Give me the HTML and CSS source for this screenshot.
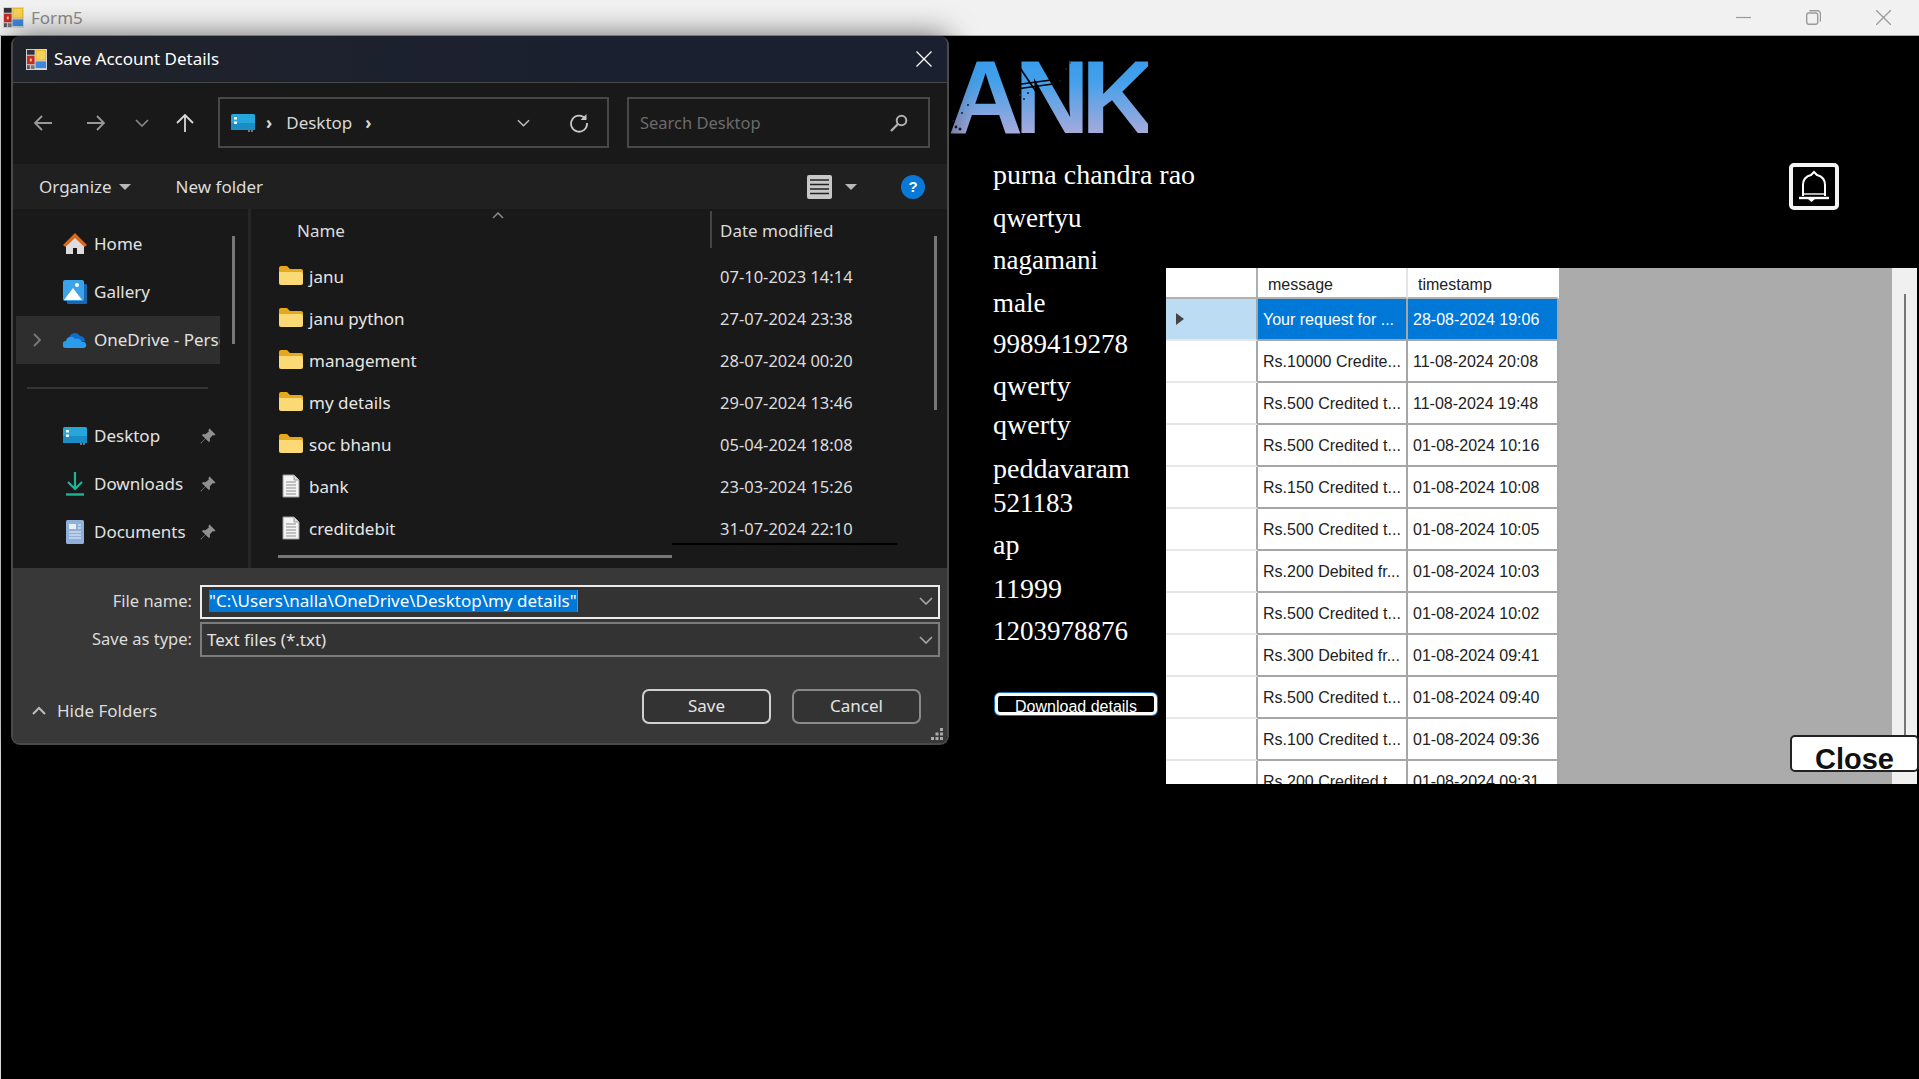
FILE: index.html
```html
<!DOCTYPE html>
<html lang="en">
<head>
<meta charset="utf-8">
<title>Form5</title>
<link rel="stylesheet" href="styles.css">
</head>
<body>
<svg class="defs" aria-hidden="true">
  <symbol id="appicon" viewBox="0 0 22 22">
    <rect width="22" height="22" fill="#d8d8d8"/>
    <rect x="1" y="1" width="8" height="5" fill="#333"/>
    <rect x="10" y="1" width="11" height="11" fill="#e8b820"/>
    <rect x="11" y="2" width="9" height="9" fill="#f6d25a"/>
    <rect x="1" y="7" width="8" height="9" fill="#c42a2a"/>
    <rect x="4" y="10" width="2" height="3" fill="#f6d25a"/>
    <rect x="10" y="13" width="11" height="7" fill="#3f86de"/>
    <rect x="1" y="17" width="3" height="4" fill="#555"/>
    <rect x="5" y="17" width="4" height="4" fill="#777"/>
  </symbol>
  <symbol id="folder" viewBox="0 0 24 20">
    <path d="M0 3a2 2 0 0 1 2-2h6l3 3h11a2 2 0 0 1 2 2v2H0z" fill="#e6a91e"/>
    <path d="M0 7h22a2 2 0 0 1 2 2v9a2 2 0 0 1-2 2H2a2 2 0 0 1-2-2z" fill="#fbd974"/>
  </symbol>
  <symbol id="doc" viewBox="0 0 18 24">
    <path d="M1 1h11l5 5v17H1z" fill="#f4f4f4" stroke="#9a9a9a"/>
    <path d="M4 8h10M4 11h10M4 14h10M4 17h10M4 20h10" stroke="#8e8e8e"/>
    <path d="M12 1v5h5" fill="#ddd" stroke="#9a9a9a"/>
  </symbol>
  <symbol id="desktop" viewBox="0 0 24 18">
    <rect width="24" height="16" rx="1.5" fill="#27a6da"/>
    <rect y="9" width="24" height="7" fill="#1a8cc6"/>
    <rect x="3" y="3" width="3" height="2.5" fill="#fff"/>
    <rect x="3" y="7.5" width="3" height="2.5" fill="#fff"/>
    <rect x="17" y="16" width="2" height="2" fill="#777"/>
    <rect x="20" y="16" width="2" height="2" fill="#777"/>
  </symbol>
  <symbol id="pin" viewBox="0 0 16 16">
    <path d="M9.5 0.5 15.5 6.5 14 7.5 12.5 7.2 9.8 10.6 10 13 8.8 14 5.5 10.7 1 15.5 0.5 15 5.3 10.5 2 7.2 3 6 5.4 6.2 8.8 3.5 8.5 2z" fill="#8f8f8f"/>
  </symbol>
  <symbol id="chev-down" viewBox="0 0 14 8">
    <path d="M1 1 7 7 13 1" fill="none" stroke="currentColor" stroke-width="1.6"/>
  </symbol>
</svg>

<div class="app">
  <header class="titlebar">
    <svg class="app-icon"><use href="#appicon"/></svg>
    <span class="app-title">Form5</span>
    <div class="win-controls">
      <svg class="win-btn" viewBox="0 0 15 15"><path d="M0 7.5h15" stroke="#9a9a9a" stroke-width="1.2"/></svg>
      <svg class="win-btn" viewBox="0 0 15 15"><rect x="0.7" y="3" width="11" height="11.3" rx="2" fill="none" stroke="#9a9a9a" stroke-width="1.4"/><path d="M3.5 0.8h8a3 3 0 0 1 3 3v8" fill="none" stroke="#9a9a9a" stroke-width="1.4"/></svg>
      <svg class="win-btn" viewBox="0 0 15 15"><path d="M0 0 15 15M15 0 0 15" stroke="#9a9a9a" stroke-width="1.3"/></svg>
    </div>
  </header>

  <main class="main">
    <section class="col-left">
      <div class="logo">
        <span class="logo-text">ANK</span>
        <svg class="logo-marks" viewBox="0 0 200 80">
          <path d="M66 2 116 76" stroke="#000" stroke-width="1.6"/>
          <path d="M66 28 118 21M68 32 105 27" stroke="#000" stroke-width="1.5"/>
          <g fill="#123">
            <circle cx="8" cy="70" r="1.4"/><circle cx="14" cy="56" r="1"/><circle cx="20" cy="48" r="1"/><circle cx="5" cy="64" r="1"/><circle cx="12" cy="72" r="1.5"/>
            <circle cx="72" cy="38" r="1.2"/><circle cx="80" cy="36" r="1"/><circle cx="76" cy="42" r="1"/><circle cx="118" cy="12" r="1"/><circle cx="112" cy="24" r="1"/><circle cx="122" cy="6" r="0.8"/>
          </g>
        </svg>
      </div>
      <ul class="info">
        <li>purna chandra rao</li>
        <li class="tight">qwertyu</li>
        <li class="tight">nagamani</li>
        <li class="tight">male</li>
        <li class="tight">9989419278</li>
        <li>qwerty</li>
        <li>qwerty</li>
        <li>peddavaram</li>
        <li class="tight">521183</li>
        <li>ap</li>
        <li>11999</li>
        <li class="tight">1203978876</li>
      </ul>
      <button class="download"><span>Download details</span></button>
    </section>

    <section class="col-right">
      <button class="bell" aria-label="Notifications">
        <svg viewBox="0 0 32 34" width="32" height="34">
          <path d="M5 26V15C5 9 9 6 13 5L16 2 19 5C23 6 27 9 27 15V26" fill="none" stroke="#fff" stroke-width="2"/>
          <path d="M5 24h22" stroke="#fff" stroke-width="1.4"/>
          <path d="M1 28H31" stroke="#fff" stroke-width="2.4"/>
          <path d="M10 29h7l-3.500 3z" fill="#fff"/>
        </svg>
      </button>
      <div class="dgv">
        <div class="dgv-table">
          <div class="dgv-row dgv-head"><div class="cell rowhead"></div><div class="cell">message</div><div class="cell">timestamp</div></div>
          <div class="dgv-row selected"><div class="cell rowhead"><span class="caret"></span></div><div class="cell">Your request for ...</div><div class="cell">28-08-2024 19:06</div></div>
          <div class="dgv-row"><div class="cell rowhead"></div><div class="cell">Rs.10000 Credite...</div><div class="cell">11-08-2024 20:08</div></div>
          <div class="dgv-row"><div class="cell rowhead"></div><div class="cell">Rs.500 Credited t...</div><div class="cell">11-08-2024 19:48</div></div>
          <div class="dgv-row"><div class="cell rowhead"></div><div class="cell">Rs.500 Credited t...</div><div class="cell">01-08-2024 10:16</div></div>
          <div class="dgv-row"><div class="cell rowhead"></div><div class="cell">Rs.150 Credited t...</div><div class="cell">01-08-2024 10:08</div></div>
          <div class="dgv-row"><div class="cell rowhead"></div><div class="cell">Rs.500 Credited t...</div><div class="cell">01-08-2024 10:05</div></div>
          <div class="dgv-row"><div class="cell rowhead"></div><div class="cell">Rs.200 Debited fr...</div><div class="cell">01-08-2024 10:03</div></div>
          <div class="dgv-row"><div class="cell rowhead"></div><div class="cell">Rs.500 Credited t...</div><div class="cell">01-08-2024 10:02</div></div>
          <div class="dgv-row"><div class="cell rowhead"></div><div class="cell">Rs.300 Debited fr...</div><div class="cell">01-08-2024 09:41</div></div>
          <div class="dgv-row"><div class="cell rowhead"></div><div class="cell">Rs.500 Credited t...</div><div class="cell">01-08-2024 09:40</div></div>
          <div class="dgv-row"><div class="cell rowhead"></div><div class="cell">Rs.100 Credited t...</div><div class="cell">01-08-2024 09:36</div></div>
          <div class="dgv-row"><div class="cell rowhead"></div><div class="cell">Rs.200 Credited t...</div><div class="cell">01-08-2024 09:31</div></div>
        </div>
        <div class="dgv-scroll"><span class="dgv-thumb"></span></div>
        <button class="close-btn"><span>Close</span></button>
      </div>
    </section>
  </main>

  <div class="dialog">
    <div class="dlg-title">
      <svg class="dlg-icon"><use href="#appicon"/></svg>
      <span class="dlg-caption">Save Account Details</span>
      <svg class="dlg-x" viewBox="0 0 16 16"><path d="M0.500 0.500 15.500 15.500M15.500 0.500 0.500 15.500" stroke="#fff" stroke-width="1.300"/></svg>
    </div>

    <div class="dlg-nav">
      <svg class="nav-ic" viewBox="0 0 18 16"><path d="M8 1 1 8l7 7M1 8h17" fill="none" stroke="#999" stroke-width="1.800"/></svg>
      <svg class="nav-ic nav-fwd" viewBox="0 0 18 16"><path d="M10 1l7 7-7 7M17 8H0" fill="none" stroke="#999" stroke-width="1.800"/></svg>
      <svg class="nav-ic nav-recent"><use href="#chev-down"/></svg>
      <svg class="nav-ic nav-up" viewBox="0 0 18 18"><path d="M1 9 9 1l8 8M9 1v17" fill="none" stroke="#d8d8d8" stroke-width="1.800"/></svg>
      <div class="addr">
        <svg class="addr-desk"><use href="#desktop"/></svg>
        <span class="crumb-sep">›</span>
        <span class="crumb">Desktop</span>
        <span class="crumb-sep crumb-end">›</span>
        <svg class="addr-drop"><use href="#chev-down"/></svg>
        <svg class="addr-refresh" viewBox="0 0 20 20"><path d="M16.500 6A8 8 0 1 0 18 10" fill="none" stroke="#c8c8c8" stroke-width="1.800"/><path d="M17.500 1v6h-6z" fill="#c8c8c8"/></svg>
      </div>
      <div class="search">
        <span class="search-text">Search Desktop</span>
        <svg class="search-ic" viewBox="0 0 18 18"><circle cx="11.500" cy="6.500" r="4.800" fill="none" stroke="#b0b0b0" stroke-width="2"/><path d="M8 10 1 17" stroke="#b0b0b0" stroke-width="2.400"/></svg>
      </div>
    </div>

    <div class="dlg-cmd">
      <span class="cmd-item">Organize</span>
      <span class="tri"></span>
      <span class="cmd-item cmd-new">New folder</span>
      <svg class="view-ic" viewBox="0 0 25 24"><rect width="25" height="24" rx="2" fill="#c8c8c8"/><path d="M3 5h19M3 9.500h19M3 14h19M3 18.500h19" stroke="#222" stroke-width="1.500"/></svg>
      <span class="tri tri-view"></span>
      <span class="help">?</span>
    </div>

    <div class="dlg-body">
      <nav class="tree">
        <div class="tree-row"><svg class="tree-ic" viewBox="0 0 24 24"><path d="M12 5 21 13V22H14V16H10V22H3V13z" fill="#dcdcdc"/><path d="M0 13 12 1 24 13 21.500 15 12 6 2.500 15z" fill="#d9691c"/></svg><span>Home</span></div>
        <div class="tree-row"><svg class="tree-ic" viewBox="0 0 24 24"><rect x="4" y="4" width="20" height="20" rx="1" fill="#1967b0"/><rect width="21" height="21" rx="2" fill="#3aa3ea"/><path d="M1 20 10 8l9 12z" fill="#fff"/><circle cx="14" cy="5" r="2" fill="#fff"/></svg><span>Gallery</span></div>
        <div class="tree-row active"><svg class="tree-chev" viewBox="0 0 8 14"><path d="M1 1l6 6-6 6" fill="none" stroke="#7a7a7a" stroke-width="1.800"/></svg><svg class="tree-ic" viewBox="0 0 24 16"><path d="M6 6a6 6 0 0 1 11-2 5 5 0 0 1 5 5H9z" fill="#0f6cc9"/><path d="M3 16a3.500 3.500 0 0 1 0-7 5 5 0 0 1 9-2 5 5 0 0 1 7 3 3 3 0 0 1 2 6z" fill="#2b9bec"/></svg><span>OneDrive - Personal</span></div>
        <div class="tree-sep"></div>
        <div class="tree-row"><svg class="tree-ic"><use href="#desktop"/></svg><span>Desktop</span><svg class="tree-pin"><use href="#pin"/></svg></div>
        <div class="tree-row"><svg class="tree-ic" viewBox="0 0 24 24"><path d="M12 0v17M5 10l7 7 7-7" fill="none" stroke="#1fb594" stroke-width="2.200"/><path d="M3 22.500h18" stroke="#1fb594" stroke-width="2.400"/></svg><span>Downloads</span><svg class="tree-pin"><use href="#pin"/></svg></div>
        <div class="tree-row"><svg class="tree-ic" viewBox="0 0 24 24"><rect x="3" y="0" width="18" height="24" rx="1.500" fill="#8fb0d8"/><rect x="6" y="4" width="7" height="5" fill="#e9eef5"/><path d="M15 5h3M15 8h3M6 12h12M6 15h12M6 18h12" stroke="#e9eef5" stroke-width="1.200"/></svg><span>Documents</span><svg class="tree-pin"><use href="#pin"/></svg></div>
        <span class="tree-scroll"></span>
      </nav>

      <div class="files">
        <div class="file-head">
          <span class="col-name">Name</span>
          <span class="col-date">Date modified</span>
          <svg class="sort" viewBox="0 0 12 7"><path d="M1 6 6 1l5 5" fill="none" stroke="#8a8a8a" stroke-width="1.500"/></svg>
        </div>
        <div class="file-row"><span class="fname"><svg class="ficon ficon-folder"><use href="#folder"/></svg>janu</span><span class="fdate">07-10-2023 14:14</span></div>
        <div class="file-row"><span class="fname"><svg class="ficon ficon-folder"><use href="#folder"/></svg>janu python</span><span class="fdate">27-07-2024 23:38</span></div>
        <div class="file-row"><span class="fname"><svg class="ficon ficon-folder"><use href="#folder"/></svg>management</span><span class="fdate">28-07-2024 00:20</span></div>
        <div class="file-row"><span class="fname"><svg class="ficon ficon-folder"><use href="#folder"/></svg>my details</span><span class="fdate">29-07-2024 13:46</span></div>
        <div class="file-row"><span class="fname"><svg class="ficon ficon-folder"><use href="#folder"/></svg>soc bhanu</span><span class="fdate">05-04-2024 18:08</span></div>
        <div class="file-row"><span class="fname"><svg class="ficon"><use href="#doc"/></svg>bank</span><span class="fdate">23-03-2024 15:26</span></div>
        <div class="file-row"><span class="fname"><svg class="ficon"><use href="#doc"/></svg>creditdebit</span><span class="fdate">31-07-2024 22:10</span></div>
        <span class="files-vscroll"></span>
        <span class="files-line"></span>
        <span class="files-hscroll"></span>
      </div>
    </div>

    <div class="dlg-foot">
      <div class="form">
        <label class="form-label form-label-first">File name:</label>
        <div class="field field-focus"><span class="sel">"C:\Users\nalla\OneDrive\Desktop\my details"</span><span class="caretline"></span><svg class="field-chev"><use href="#chev-down"/></svg></div>
        <label class="form-label">Save as type:</label>
        <div class="field"><span class="field-text">Text files (*.txt)</span><svg class="field-chev"><use href="#chev-down"/></svg></div>
      </div>
      <div class="actions">
        <svg class="hide-chev" viewBox="0 0 14 9"><path d="M1 8 7 2l6 6" fill="none" stroke="#bdbdbd" stroke-width="2"/></svg>
        <span class="hide-text">Hide Folders</span>
        <button class="dbtn dbtn-primary">Save</button>
        <button class="dbtn">Cancel</button>
      </div>
      <svg class="grip" viewBox="0 0 12 12"><g fill="#aaa"><rect x="9" y="0" width="3" height="3"/><rect x="4.500" y="4.500" width="3" height="3"/><rect x="9" y="4.500" width="3" height="3"/><rect x="0" y="9" width="3" height="3"/><rect x="4.500" y="9" width="3" height="3"/><rect x="9" y="9" width="3" height="3"/></g></svg>
    </div>
  </div>
</div>
</body>
</html>
```
FILE: styles.css
```css
* { box-sizing: border-box; }
html, body { margin: 0; height: 100%; background: #000; overflow: hidden; }
ul { list-style: none; margin: 0; padding: 0; }
button { font: inherit; padding: 0; cursor: default; }
.defs { position: absolute; width: 0; height: 0; }

.app {
  width: 1919px; height: 1079px; position: relative;
  display: flex; flex-direction: column;
  font-family: "Noto Sans", sans-serif;
}

/* main window title bar */
.titlebar {
  height: 36px; flex: none; background: #f1f1f1; border-bottom: 1px solid #a8a8a8;
  display: flex; align-items: center; padding-left: 3px;
}
.app-icon { width: 21px; height: 21px; }
.app-title { margin-left: 7px; font-size: 17px; color: #8c8c8c; }
.win-controls { margin-left: auto; margin-right: 28px; display: flex; gap: 55px; }
.win-btn { width: 15px; height: 15px; }

/* main window client area */
.main {
  flex: 1; background: #000; border-left: 1px solid #d8d8d8;
  padding-left: 949px; display: grid; grid-template-columns: 216px 1fr; align-items: start;
}
.col-left { display: flex; flex-direction: column; align-items: flex-start; }

.logo { position: relative; margin: 21px 0 0 -2px; height: 80px; width: 200px; }
.logo-text {
  display: block; font: bold 104px/80px "Liberation Sans", sans-serif; letter-spacing: -8.5px;
  background: linear-gradient(#369ceb, #44a0ea 30%, #a6aadb 95%);
  -webkit-background-clip: text; background-clip: text; color: transparent;
}
.logo-marks { position: absolute; inset: 0; width: 200px; height: 80px; }

.info {
  margin-top: 23px; padding-left: 43px; display: grid;
  grid-template-rows: 43px 42px 43px 41px 42px 39px 44px 34px 42px 44px 42px 30px;
  font: 28px/30px "Liberation Serif", serif; color: #fff; white-space: nowrap;
}
.info .tight { font-size: 27px; }
.download {
  margin: 47px 0 0 45px; width: 162px; height: 22px; background: #000;
  border: 3px solid #fff; border-radius: 5px; box-shadow: 0 0 0 1px #1a6fc0;
  color: #fff; font: 16px/20px "Liberation Sans", sans-serif; overflow: hidden;
}
.download span { display: block; margin-top: 1px; }

.col-right { display: flex; flex-direction: column; align-items: flex-start; padding-right: 2px; }
.bell {
  margin: 127px 0 0 623px; width: 50px; height: 47px; background: #000;
  border: 4px solid #f4f4f4; border-radius: 5px;
  display: flex; align-items: center; justify-content: center;
}

.dgv { position: relative; margin-top: 58px; height: 516px; width: 751px; display: flex; }
.dgv-table { flex: 1; background: #ababab; overflow: hidden; }
.dgv-scroll { width: 25px; background: #f0f0f0; position: relative; display: flex; justify-content: center; }
.dgv-thumb { margin-top: 26px; width: 2px; height: 441px; background: #777; }
.dgv-row {
  display: grid; grid-template-columns: 92px 150px 151px; width: 393px; height: 42px;
  font: 16px/42px "Liberation Sans", sans-serif; color: #222;
}
.dgv-head { height: 31px; line-height: 33px; }
.cell {
  background: #fff; padding-left: 5px; white-space: nowrap; overflow: hidden;
  border-right: 2px solid #a6a6a6; border-bottom: 2px solid #a6a6a6;
}
.rowhead { padding: 0; border-bottom-color: #e6e6e6; display: flex; align-items: center; }
.dgv-head .cell { padding-left: 10px; border-right-color: #e4e4e4; border-bottom-color: #b0b0b0; }
.dgv-head .rowhead { border-right-color: #b0b0b0; }
.dgv-head .cell:last-child { border-right-color: #fff; }
.selected .cell { background: #0078d7; color: #fff; }
.selected .rowhead { background: #bcdcf4; }
.caret {
  margin-left: 10px; width: 0; height: 0;
  border-left: 8px solid #444; border-top: 6.500px solid transparent; border-bottom: 6.500px solid transparent;
}
.close-btn {
  position: absolute; right: -2px; bottom: 12px; width: 129px; height: 37px;
  background: #fff; border: 2px solid #222; border-radius: 5px; overflow: hidden;
  font: bold 29px/30px "Liberation Sans", sans-serif; color: #111;
}
.close-btn span { display: block; margin-top: 7px; }

/* save dialog, a window lying over the form */
.dialog {
  position: absolute; left: 11px; top: 36px; width: 938px; height: 709px;
  border: 2px solid #4a4a4a; border-top: 0; border-radius: 9px; overflow: hidden;
  box-shadow: 0 0 30px rgba(0,0,0,.6);
  display: flex; flex-direction: column; color: #e4e4e4; font-size: 17px; background: #191919;
}
.dlg-title {
  height: 47px; flex: none; display: flex; align-items: center; padding-left: 13px;
  background: linear-gradient(90deg, #20232a, #1b2030 60%);
  border-bottom: 1px solid #484848;
}
.dlg-icon { width: 21px; height: 21px; }
.dlg-caption { margin: 0 0 2px 7px; color: #fff; }
.dlg-x { margin-left: auto; margin-right: 15px; width: 16px; height: 16px; }

.dlg-nav {
  height: 81px; flex: none; background: #191919; display: flex; align-items: center; padding-bottom: 2px;
}
.nav-ic { width: 18px; height: 16px; flex: none; margin-left: 21px; }
.nav-fwd { margin-left: 35px; }
.nav-recent { margin-left: 30px; width: 14px; height: 8px; color: #8a8a8a; }
.nav-up { margin-left: 27px; height: 18px; }
.addr {
  margin-left: 24px; width: 391px; height: 51px; border: 2px solid #484848;
  display: flex; align-items: center; padding-left: 11px; color: #d8d8d8;
}
.addr-desk { width: 24px; height: 18px; }
.crumb-sep { margin-left: 11px; font-weight: 700; }
.crumb { margin-left: 14px; }
.crumb-end { margin-left: 13px; }
.addr-drop { margin-left: auto; width: 13px; height: 8px; color: #bbb; }
.addr-refresh { margin: 0 18px 0 39px; width: 20px; height: 20px; }
.search {
  margin-left: 18px; width: 303px; height: 51px; border: 2px solid #484848;
  display: flex; align-items: center; padding: 0 20px 0 11px;
}
.search-text { color: #6b6b6b; font-size: 16.500px; }
.search-ic { margin-left: auto; width: 18px; height: 18px; }

.dlg-cmd {
  height: 45px; flex: none; background: #202020; display: flex; align-items: center;
  padding-left: 26px;
}
.cmd-item { color: #dcdcdc; }
.tri { margin-left: 7px; width: 0; height: 0; border-top: 6px solid #b8b8b8; border-left: 6px solid transparent; border-right: 6px solid transparent; }
.cmd-new { margin-left: 45px; }
.view-ic { margin-left: auto; width: 25px; height: 24px; }
.tri-view { margin-left: 13px; }
.help {
  margin: 0 22px 0 44px; width: 24px; height: 24px; border-radius: 50%; background: #0a78d6;
  color: #fff; font: bold 15px/24px "Liberation Sans", sans-serif; text-align: center;
}

.dlg-body { flex: 1; display: grid; grid-template-columns: 238px 1fr; background: #191919; min-height: 0; }
.tree { position: relative; padding: 11px 0 0 3px; border-right: 3px solid #262626; overflow: hidden; }
.tree-row {
  position: relative; width: 204px; height: 48px; display: flex; align-items: center; gap: 7px;
  padding-left: 47px; overflow: hidden; white-space: nowrap; color: #e2e2e2;
}
.tree-row span { margin-bottom: 2px; }
.tree-row.active { background: #2e2e2e; }
.tree-ic { width: 24px; height: 24px; flex: none; }
.tree-chev { position: absolute; left: 17px; width: 8px; height: 14px; }
.tree-pin { position: absolute; right: 4px; width: 16px; height: 16px; }
.tree-sep { height: 48px; width: 181px; margin-left: 11px; position: relative; }
.tree-sep::after { content: ""; position: absolute; left: 0; right: 0; top: 23px; height: 2px; background: #333; }
.tree-scroll { position: absolute; left: 219px; top: 27px; width: 3px; height: 108px; background: #777; }

.files { position: relative; overflow: hidden; }
.file-head, .file-row { display: grid; grid-template-columns: 469px 1fr; align-items: center; }
.file-head { height: 47px; position: relative; color: #dcdcdc; padding-bottom: 5px; }
.col-name { padding-left: 46px; }
.col-date::before { content: ""; position: absolute; left: 459px; top: 2px; height: 37px; width: 2px; background: #444; }
.sort { position: absolute; left: 241px; top: 3px; width: 12px; height: 7px; }
.file-row { height: 42px; color: #dcdcdc; padding-bottom: 2px; }
.fname { display: flex; align-items: center; gap: 6px; padding-left: 28px; color: #e6e6e6; }
.fdate { font-size: 16.500px; }
.ficon { width: 24px; height: 24px; flex: none; }
.ficon-folder { margin-top: -2px; }
.files-vscroll { position: absolute; left: 683px; top: 27px; width: 3px; height: 174px; background: #777; }
.files-line { position: absolute; left: 421px; top: 334px; width: 225px; height: 2px; background: #000; }
.files-hscroll { position: absolute; left: 27px; top: 346px; width: 394px; height: 3px; background: #777; }

.dlg-foot { height: 175px; flex: none; background: #383838; position: relative; padding-top: 17px; }
.form { display: grid; grid-template-columns: 179px 740px; column-gap: 8px; row-gap: 3px; }
.form-label { text-align: right; line-height: 34px; color: #dcdcdc; font-size: 16.500px; }
.form-label-first { line-height: 32px; }
.field {
  height: 35px; border: 2px solid #7c7c7c; background: #333; display: flex; align-items: center;
  padding-left: 5px; position: relative; color: #e2e2e2;
}
.field-focus { border-color: #ececec; padding: 0 0 2px 7px; height: 34px; }
.sel { background: #0078d7; color: #fff; line-height: 22px; white-space: nowrap; }
.caretline { width: 1px; height: 22px; background: #e07020; }
.field-chev { position: absolute; right: 5px; width: 14px; height: 8px; color: #a8a8a8; }
.actions { margin-top: 32px; height: 35px; display: flex; align-items: center; padding: 0 26px 0 19px; }
.hide-chev { width: 14px; height: 9px; margin-top: 8px; }
.hide-text { margin: 8px 0 0 11px; color: #dcdcdc; }
.dbtn {
  width: 129px; height: 35px; background: #333; border: 2px solid #8a8a8a; border-radius: 7px;
  color: #e4e4e4; font: 17px "Noto Sans", sans-serif; margin-left: 21px; padding-bottom: 2px;
}
.dbtn-primary { margin-left: auto; border-color: #d0d0d0; }
.grip { position: absolute; right: 4px; bottom: 3px; width: 12px; height: 12px; }
```
